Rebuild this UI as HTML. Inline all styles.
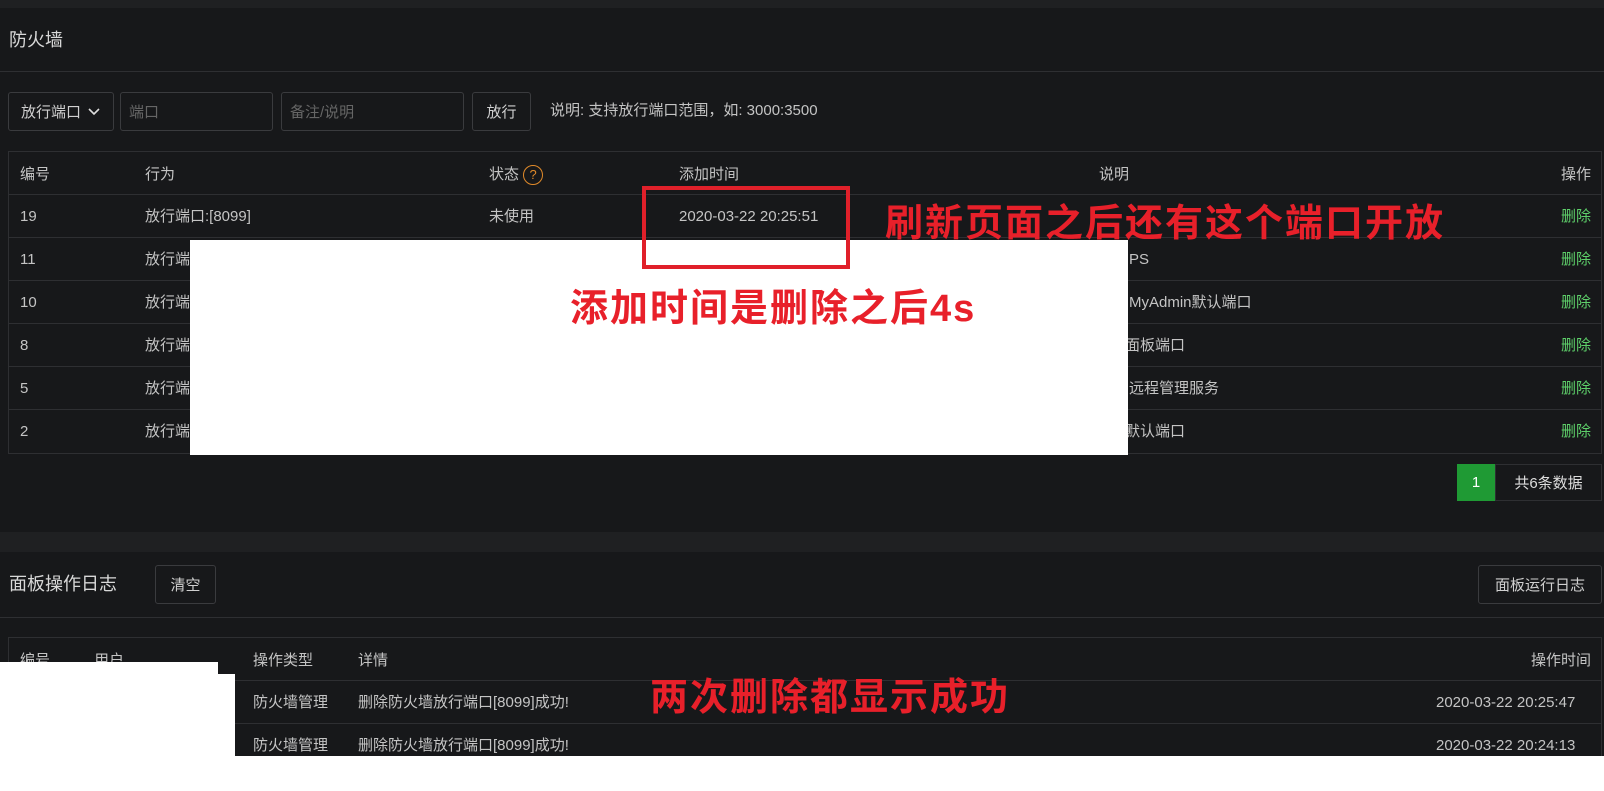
<!DOCTYPE html>
<html><head><meta charset="utf-8"><style>
*{margin:0;padding:0;box-sizing:border-box}
body{width:1604px;height:791px;background:#fff;position:relative;overflow:hidden;font-family:"Liberation Sans","Noto Sans CJK SC",sans-serif;font-size:15px;color:#c4c4c4}
.abs{position:absolute}
.dark{background:#17181a}
.btn{position:absolute;border:1px solid #3a3b3e;border-radius:3px;background:#17181a;color:#d0d0d0;display:flex;align-items:center;justify-content:center}
.inp{position:absolute;border:1px solid #3a3b3e;border-radius:3px;color:#666;padding-left:8px;display:flex;align-items:center}
.hl{position:absolute;height:1px;background:#2e2f32}
.t{position:absolute;white-space:nowrap;line-height:20px}
.del{color:#5ed06a}
.red{position:absolute;color:#e8202a;font-weight:bold;font-size:38px;white-space:nowrap;line-height:44px;letter-spacing:2px}
</style></head><body>
<div class="abs" style="left:0;top:0;width:1604px;height:756px;background:#1f2022"></div>
<div class="abs dark" style="left:0;top:8px;width:1604px;height:524px"></div>
<div class="abs dark" style="left:0;top:552px;width:1604px;height:204px"></div>

<div class="t" style="left:9px;top:30px;font-size:18px;color:#d8d8d8">防火墙</div>
<div class="hl" style="left:0;top:71px;width:1604px"></div>

<div class="btn" style="left:8px;top:92px;width:106px;height:39px;justify-content:flex-start;padding-left:12px">放行端口 <svg width="14" height="10" style="margin-left:6px"><path d="M2 2 L7 7 L12 2" stroke="#ddd" stroke-width="1.6" fill="none"/></svg></div>
<div class="inp" style="left:120px;top:92px;width:153px;height:39px">端口</div>
<div class="inp" style="left:281px;top:92px;width:183px;height:39px">备注/说明</div>
<div class="btn" style="left:472px;top:92px;width:59px;height:39px">放行</div>
<div class="t" style="left:550px;top:101px">说明: 支持放行端口范围，如: 3000:3500</div>

<div class="abs" style="left:8px;top:151px;width:1594px;height:303px;border:1px solid #2e2f32"></div>
<div class="hl" style="left:8px;top:194px;width:1594px"></div>
<div class="hl" style="left:8px;top:237px;width:1594px"></div>
<div class="hl" style="left:8px;top:280px;width:1594px"></div>
<div class="hl" style="left:8px;top:323px;width:1594px"></div>
<div class="hl" style="left:8px;top:366px;width:1594px"></div>
<div class="hl" style="left:8px;top:409px;width:1594px"></div>

<div class="t" style="left:20px;top:165px">编号</div>
<div class="t" style="left:145px;top:165px">行为</div>
<div class="t" style="left:489px;top:165px">状态 <span style="display:inline-block;width:20px;height:20px;border:1.5px solid #e08a2a;border-radius:50%;color:#e08a2a;font-size:13px;text-align:center;line-height:17px;vertical-align:top">?</span></div>
<div class="t" style="left:679px;top:165px">添加时间</div>
<div class="t" style="left:1099px;top:165px">说明</div>
<div class="t" style="left:1561px;top:165px">操作</div>

<div class="t" style="left:20px;top:207px">19</div>
<div class="t" style="left:145px;top:207px">放行端口:[8099]</div>
<div class="t" style="left:489px;top:207px">未使用</div>
<div class="t" style="left:679px;top:207px">2020-03-22 20:25:51</div>
<div class="t del" style="left:1561px;top:207px">删除</div>

<div class="t" style="left:20px;top:250px">11</div><div class="t" style="left:145px;top:250px">放行端口</div><div class="t" style="left:1129px;top:250px">PS</div><div class="t del" style="left:1561px;top:250px">删除</div>
<div class="t" style="left:20px;top:293px">10</div><div class="t" style="left:145px;top:293px">放行端口</div><div class="t" style="left:1129px;top:293px">MyAdmin默认端口</div><div class="t del" style="left:1561px;top:293px">删除</div>
<div class="t" style="left:20px;top:336px">8</div><div class="t" style="left:145px;top:336px">放行端口</div><div class="t" style="left:1125px;top:336px">面板端口</div><div class="t del" style="left:1561px;top:336px">删除</div>
<div class="t" style="left:20px;top:379px">5</div><div class="t" style="left:145px;top:379px">放行端口</div><div class="t" style="left:1129px;top:379px">远程管理服务</div><div class="t del" style="left:1561px;top:379px">删除</div>
<div class="t" style="left:20px;top:422px">2</div><div class="t" style="left:145px;top:422px">放行端口</div><div class="t" style="left:1125px;top:422px">默认端口</div><div class="t del" style="left:1561px;top:422px">删除</div>

<div class="abs" style="left:1457px;top:464px;width:38px;height:37px;background:#1f9a34;color:#fff;display:flex;align-items:center;justify-content:center">1</div>
<div class="abs" style="left:1495px;top:464px;width:107px;height:37px;border:1px solid #2e2f32;color:#ddd;display:flex;align-items:center;justify-content:center">共6条数据</div>

<div class="t" style="left:9px;top:574px;font-size:18px;color:#d8d8d8">面板操作日志</div>
<div class="btn" style="left:155px;top:565px;width:61px;height:39px">清空</div>
<div class="btn" style="left:1478px;top:565px;width:124px;height:39px">面板运行日志</div>
<div class="hl" style="left:0;top:617px;width:1604px"></div>

<div class="abs" style="left:8px;top:637px;width:1594px;height:130px;border:1px solid #2e2f32"></div>
<div class="hl" style="left:8px;top:680px;width:1594px"></div>
<div class="hl" style="left:8px;top:723px;width:1594px"></div>
<div class="t" style="left:20px;top:651px">编号</div>
<div class="t" style="left:94px;top:651px">用户</div>
<div class="t" style="left:253px;top:651px">操作类型</div>
<div class="t" style="left:358px;top:651px">详情</div>
<div class="t" style="left:1531px;top:651px">操作时间</div>
<div class="t" style="left:253px;top:693px">防火墙管理</div>
<div class="t" style="left:358px;top:693px">删除防火墙放行端口[8099]成功!</div>
<div class="t" style="left:1436px;top:693px">2020-03-22 20:25:47</div>
<div class="t" style="left:253px;top:736px">防火墙管理</div>
<div class="t" style="left:358px;top:736px">删除防火墙放行端口[8099]成功!</div>
<div class="t" style="left:1436px;top:736px">2020-03-22 20:24:13</div>

<div class="abs" style="left:0;top:756px;width:1604px;height:35px;background:#fff"></div>
<div class="abs" style="left:0;top:662px;width:218px;height:100px;background:#fff"></div>
<div class="abs" style="left:0;top:674px;width:235px;height:90px;background:#fff"></div>

<div class="abs" style="left:190px;top:240px;width:938px;height:215px;background:#fff"></div>
<div class="abs" style="left:642px;top:186px;width:208px;height:83px;border:4px solid #e0202a"></div>
<div class="red" style="left:885px;top:202px">刷新页面之后还有这个端口开放</div>
<div class="red" style="left:570px;top:287px">添加时间是删除之后4s</div>
<div class="red" style="left:650px;top:676px">两次删除都显示成功</div>
</body></html>
